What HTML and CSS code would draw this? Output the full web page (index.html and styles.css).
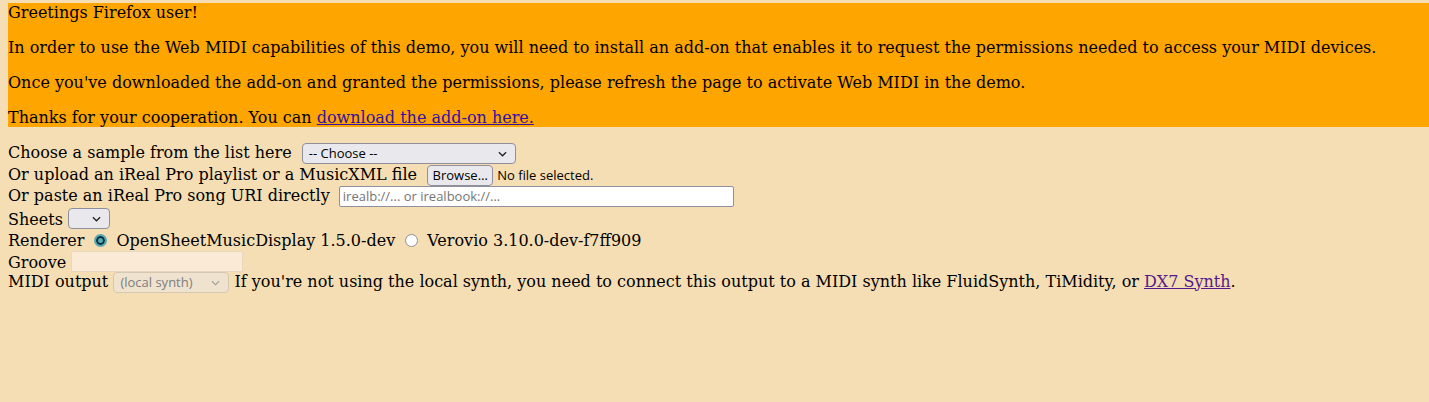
FILE: index.html
```html
<!DOCTYPE html>
<html>
<head>
<meta charset="utf-8">
<link rel="stylesheet" href="styles.css">
</head>
<body>
<div class="banner">
  <p>Greetings Firefox user!</p>
  <p>In order to use the Web MIDI capabilities of this demo, you will need to install an add-on that enables it to request the permissions needed to access your MIDI devices.</p>
  <p>Once you've downloaded the add-on and granted the permissions, please refresh the page to activate Web MIDI in the demo.</p>
  <p>Thanks for your cooperation. You can <a href="#" class="link">download the add-on here.</a></p>
</div>
<div class="form">
  <div class="row">Choose a sample from the list here <span class="sel sel-choose"><span class="sel-text">-- Choose --</span><svg class="chev" viewBox="0 0 10 6"><path d="M1 1 L5 5 L9 1" fill="none" stroke="#222" stroke-width="1.4"/></svg></span></div>
  <div class="row">Or upload an iReal Pro playlist or a MusicXML file <span class="btn">Browse…</span><span class="ctl-text">No file selected.</span></div>
  <div class="row">Or paste an iReal Pro song URI directly <span class="inp inp-uri">irealb://... or irealbook://...</span></div>
  <div class="row">Sheets <span class="sel sel-sheets"><svg class="chev" viewBox="0 0 10 6"><path d="M1 1 L5 5 L9 1" fill="none" stroke="#222" stroke-width="1.4"/></svg></span></div>
  <div class="row row-renderer">Renderer <span class="radio on"></span>OpenSheetMusicDisplay 1.5.0-dev <span class="radio off"></span>Verovio 3.10.0-dev-f7ff909</div>
  <div class="row row-groove">Groove <span class="inp inp-groove"></span></div>
  <div class="row">MIDI output <span class="sel sel-midi"><span class="sel-text">(local synth)</span><svg class="chev" viewBox="0 0 10 6"><path d="M1 1 L5 5 L9 1" fill="none" stroke="#999" stroke-width="1.2"/></svg></span> If you're not using the local synth, you need to connect this output to a MIDI synth like FluidSynth, TiMidity, or <a href="#" class="visited">DX7 Synth</a>.</div>
</div>
</body>
</html>
```
FILE: styles.css
```css
html, body {
  background: #f5deb3;
}
body {
  margin: 0;
  padding: 3px 0 0 8px;
  font-family: "DejaVu Serif", serif;
  font-size: 16px;
  color: #000;
  overflow: hidden;
}
.banner {
  background: #ffa500;
}
.banner p {
  margin: 16px 0;
  line-height: 19px;
}
.banner p:first-child { margin-top: 0; }
.banner p:last-child { margin-bottom: 0; }
.link { color: #3311aa; }
.visited { color: #551a8b; }
.form {
  margin-top: 16px;
}
.row {
  line-height: 19px;
  height: 21.5px;
  white-space: nowrap;
}
.row-renderer {
  padding-top: 2px;
  height: 19.5px;
}
.row-groove {
  height: 21px;
}
.sel, .btn, .inp {
  display: inline-flex;
  align-items: center;
  box-sizing: border-box;
  height: 21px;
  vertical-align: baseline;
  font-family: "Open Sans", "Noto Sans", sans-serif;
  font-size: 13px;
  position: relative;
}
.sel {
  background: #e9e9ed;
  border: 1px solid #8f8f9d;
  border-radius: 4px;
  padding: 0 6px;
  color: #000;
}
.sel .chev {
  position: absolute;
  right: 8px;
  top: 7px;
  width: 9px;
  height: 6px;
}
.sel-choose { width: 214px; margin-left: 5px; }
.sel-sheets { width: 42px; vertical-align: -4px; }
.sel-midi {
  width: 116px;
  background: #efe3cf;
  border-color: #d6c7b0;
  color: #7d7d7d;
}
.btn {
  width: 66px;
  justify-content: center;
  background: #e9e9ed;
  border: 1px solid #8f8f9d;
  border-radius: 4px;
  margin-left: 5px;
}
.ctl-text {
  font-family: "Open Sans", "Noto Sans", sans-serif;
  font-size: 13px;
  margin-left: 4px;
}
.inp {
  background: #fff;
  border: 1px solid #8f8f9d;
  border-radius: 2px;
  padding: 0 3px;
  color: #757575;
}
.inp-uri { width: 395px; margin-left: 4px; }
.inp-groove {
  width: 172px;
  background: #fbebd6;
  border-color: #e8d8c0;
  vertical-align: -4px;
}
.radio {
  display: inline-block;
  box-sizing: border-box;
  width: 13px;
  height: 13px;
  border-radius: 50%;
  border: 1px solid #8f8f9d;
  background: #fff;
  vertical-align: -1px;
}
.radio.on {
  border: 2px solid #5aa9b0;
  background: #56adb3;
  box-shadow: inset 0 0 0 2px #0c2f44;
  margin: 0 9px 0 5px;
}
.radio.off {
  margin: 0 9px 0 5px;
}
```
